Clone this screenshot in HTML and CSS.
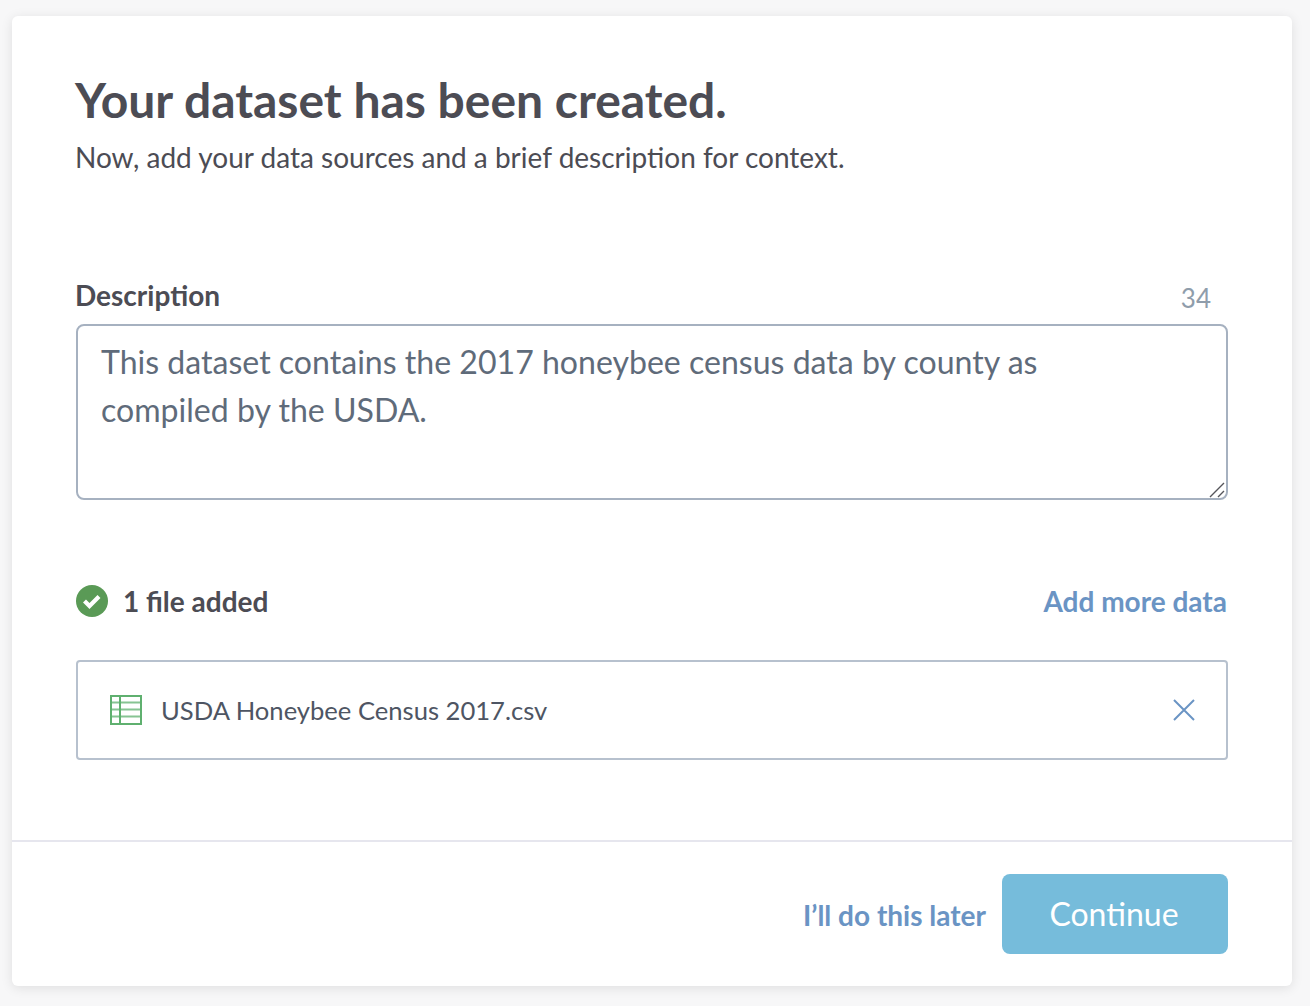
FILE: index.html
```
<!DOCTYPE html>
<html lang="en">
<head>
<meta charset="utf-8">
<title>Dataset created</title>
<link rel="stylesheet" href="styles.css">
</head>
<body>
<main class="card">
  <div class="content">
    <h1 class="title">Your dataset has been created.</h1>
    <p class="subtitle">Now, add your data sources and a brief description for context.</p>
    <div class="label-row">
      <label class="label" for="desc">Description</label>
      <span class="count">34</span>
    </div>
    <div class="textarea-wrap">
      <textarea id="desc" class="textarea" spellcheck="false">This dataset contains the 2017 honeybee census data by county as compiled by the USDA.</textarea>
      <svg class="grip" width="16" height="16" viewBox="0 0 16 16"><path d="M1 15L15 1M9 15l6-6" fill="none" stroke="#55555a" stroke-width="1.4"/></svg>
    </div>
    <div class="files-row">
      <div class="files-status">
        <svg class="check" width="32" height="32" viewBox="0 0 32 32"><circle cx="16" cy="16" r="16" fill="#5a9a56"/><path d="M8.500 16l5 5 9.500-9.500" fill="none" stroke="#fff" stroke-width="4.200"/></svg>
        <span class="files-count">1 file added</span>
      </div>
      <a class="link add-more">Add more data</a>
    </div>
    <div class="file">
      <svg class="file-icon" width="32" height="30" viewBox="0 0 32 30"><g fill="none" stroke="#5fb06f"><rect x="1" y="1" width="30" height="28" stroke-width="2"/><path d="M10 1v28" stroke-width="2"/><path d="M1 7.500h30M1 14.500h30M1 21.500h30" stroke-width="2" opacity=".75"/></g></svg>
      <span class="file-name">USDA Honeybee Census 2017.csv</span>
      <svg class="remove" width="24" height="24" viewBox="0 0 24 24"><path d="M2 2l20 20M22 2L2 22" fill="none" stroke="#6a94c4" stroke-width="2"/></svg>
    </div>
  </div>
  <footer class="footer">
    <a class="link later">I’ll do this later</a>
    <button class="continue" type="button">Continue</button>
  </footer>
</main>
</body>
</html>
```
FILE: styles.css
```
* { box-sizing: border-box; }
html, body { height: 100%; }
body {
  margin: 0;
  padding: 16px 18px 20px 12px;
  background: #f7f7f8;
  font-family: Lato, "Open Sans", sans-serif;
  color: #4c4c54;
  overflow: hidden;
}
.card {
  width: 1280px;
  height: 970px;
  background: #fff;
  border-radius: 6px;
  box-shadow: 0 2px 12px rgba(0, 0, 0, .1);
  display: flex;
  flex-direction: column;
}
.content { flex: 1; padding: 54px 64px 0; display: flex; flex-direction: column; }
.title { margin: 0 0 0 -1px; font-size: 48px; line-height: 60px; font-weight: 700; color: #4c4c54; }
.subtitle { margin: 9px 0 0 -1px; font-size: 28px; line-height: 36px; color: #4c4c54; }
.label-row { margin-top: 102px; margin-left: -1px; display: flex; justify-content: space-between; align-items: flex-end; height: 36px; padding-right: 17px; }
.label { font-size: 28px; line-height: 36px; font-weight: 700; }
.count { font-size: 26px; line-height: 30px; color: #8f9dab; }
.textarea-wrap { position: relative; margin-top: 11px; }
.textarea {
  display: block;
  width: 100%;
  height: 176px;
  padding: 12px 170px 14px 23px;
  border: 2px solid #a6b1c0;
  border-radius: 8px;
  font: 32.07px/48px Lato, sans-serif;
  color: #5f6b7a;
  outline: none;
  resize: none;
}
.grip { position: absolute; right: 3px; bottom: 2px; }
.files-row { margin-top: 81px; display: flex; justify-content: space-between; align-items: center; height: 40px; }
.files-status { display: flex; align-items: center; gap: 15px; }
.check { display: block; }
.files-count { font-size: 28px; font-weight: 700; }
.add-more { margin-right: 1px; }
.link { color: #6a94c4; font-weight: 700; font-size: 28px; cursor: pointer; }
.file {
  margin-top: 39px;
  height: 100px;
  border: 2px solid #b7c1ce;
  border-radius: 4px;
  padding: 0 30px 0 32px;
  display: flex;
  align-items: center;
  gap: 19px;
}
.file-name { flex: 1; font-size: 25.6px; color: #4e5563; }
.footer {
  height: 146px;
  border-top: 2px solid #e6e6ee;
  padding: 32px 64px 0;
  display: flex;
  justify-content: flex-end;
  align-items: flex-start;
}
.later { line-height: 82px; margin-right: 16px; }
.continue {
  width: 226px;
  height: 80px;
  padding: 0 2px 2px 0;
  background: #76bcdb;
  border: 0;
  border-radius: 8px;
  color: #fff;
  font: 32px Lato, sans-serif;
}
```
